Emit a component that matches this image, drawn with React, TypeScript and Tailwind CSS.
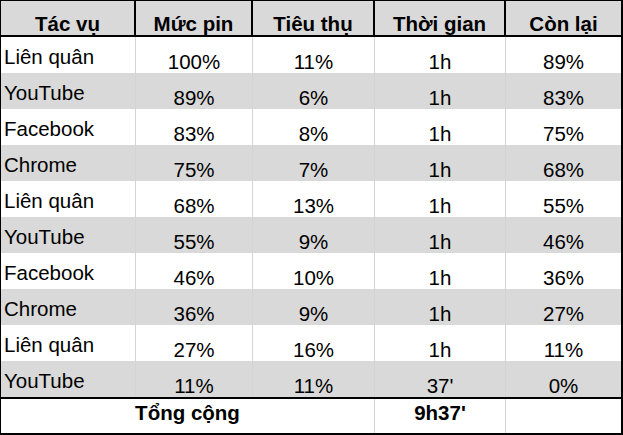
import React from "react";

const rows: [string, string, string, string, string][] = [
  ["Liên quân", "100%", "11%", "1h", "89%"],
  ["YouTube", "89%", "6%", "1h", "83%"],
  ["Facebook", "83%", "8%", "1h", "75%"],
  ["Chrome", "75%", "7%", "1h", "68%"],
  ["Liên quân", "68%", "13%", "1h", "55%"],
  ["YouTube", "55%", "9%", "1h", "46%"],
  ["Facebook", "46%", "10%", "1h", "36%"],
  ["Chrome", "36%", "9%", "1h", "27%"],
  ["Liên quân", "27%", "16%", "1h", "11%"],
  ["YouTube", "11%", "11%", "37'", "0%"],
];

const headers = ["Tác vụ", "Mức pin", "Tiêu thụ", "Thời gian", "Còn lại"];
const widths = ["w-[135px]", "w-[117px]", "w-[122px]", "w-[131px]", "w-[115px]"];

export default function App() {
  return (
    <div
      className="w-[623px] h-[435px] bg-white text-black text-[20.5px] leading-[23px] border-l border-t border-r-2 border-b-2 border-black flex flex-col"
      style={{ fontFamily: '"Liberation Sans", Arial, sans-serif' }}
    >
      {/* header */}
      <div className="flex h-[36px] bg-[#d9d9d9] border-b-2 border-black font-bold">
        <div className={`${widths[0]} border-r-2 border-black flex items-end justify-center`}>{headers[0]}</div>
        <div className={`${widths[1]} border-r-2 border-black flex items-end justify-center`}>{headers[1]}</div>
        <div className={`${widths[2]} border-r-2 border-black flex items-end justify-center`}>{headers[2]}</div>
        <div className={`${widths[3]} border-r-2 border-black flex items-end justify-center`}>{headers[3]}</div>
        <div className={`${widths[4]} flex items-end justify-center`}>{headers[4]}</div>
      </div>
      {rows.map((r, i) => (
        <div key={i} className={`flex h-[36px] ${i % 2 === 1 ? "bg-[#d9d9d9]" : "bg-white"}`}>
          <div className={`${widths[0]} border-r border-[#d4d4d4] flex items-end pb-[5px] pl-[3px]`}>{r[0]}</div>
          <div className={`${widths[1]} border-r border-[#d4d4d4] flex items-end justify-center`}>{r[1]}</div>
          <div className={`${widths[2]} border-r border-[#d4d4d4] flex items-end justify-center`}>{r[2]}</div>
          <div className={`${widths[3]} border-r border-[#d4d4d4] flex items-end justify-center`}>{r[3]}</div>
          <div className={`${widths[4]} flex items-end justify-center`}>{r[4]}</div>
        </div>
      ))}
      {/* total */}
      <div className="flex flex-1 border-t-2 border-black font-bold">
        <div className="w-[374px] border-r border-[#d4d4d4] flex items-start justify-center pt-[2px]">Tổng cộng</div>
        <div className={`${widths[3]} border-r border-[#d4d4d4] flex items-start justify-center pt-[2px]`}>9h37'</div>
        <div className={`${widths[4]}`}></div>
      </div>
    </div>
  );
}
